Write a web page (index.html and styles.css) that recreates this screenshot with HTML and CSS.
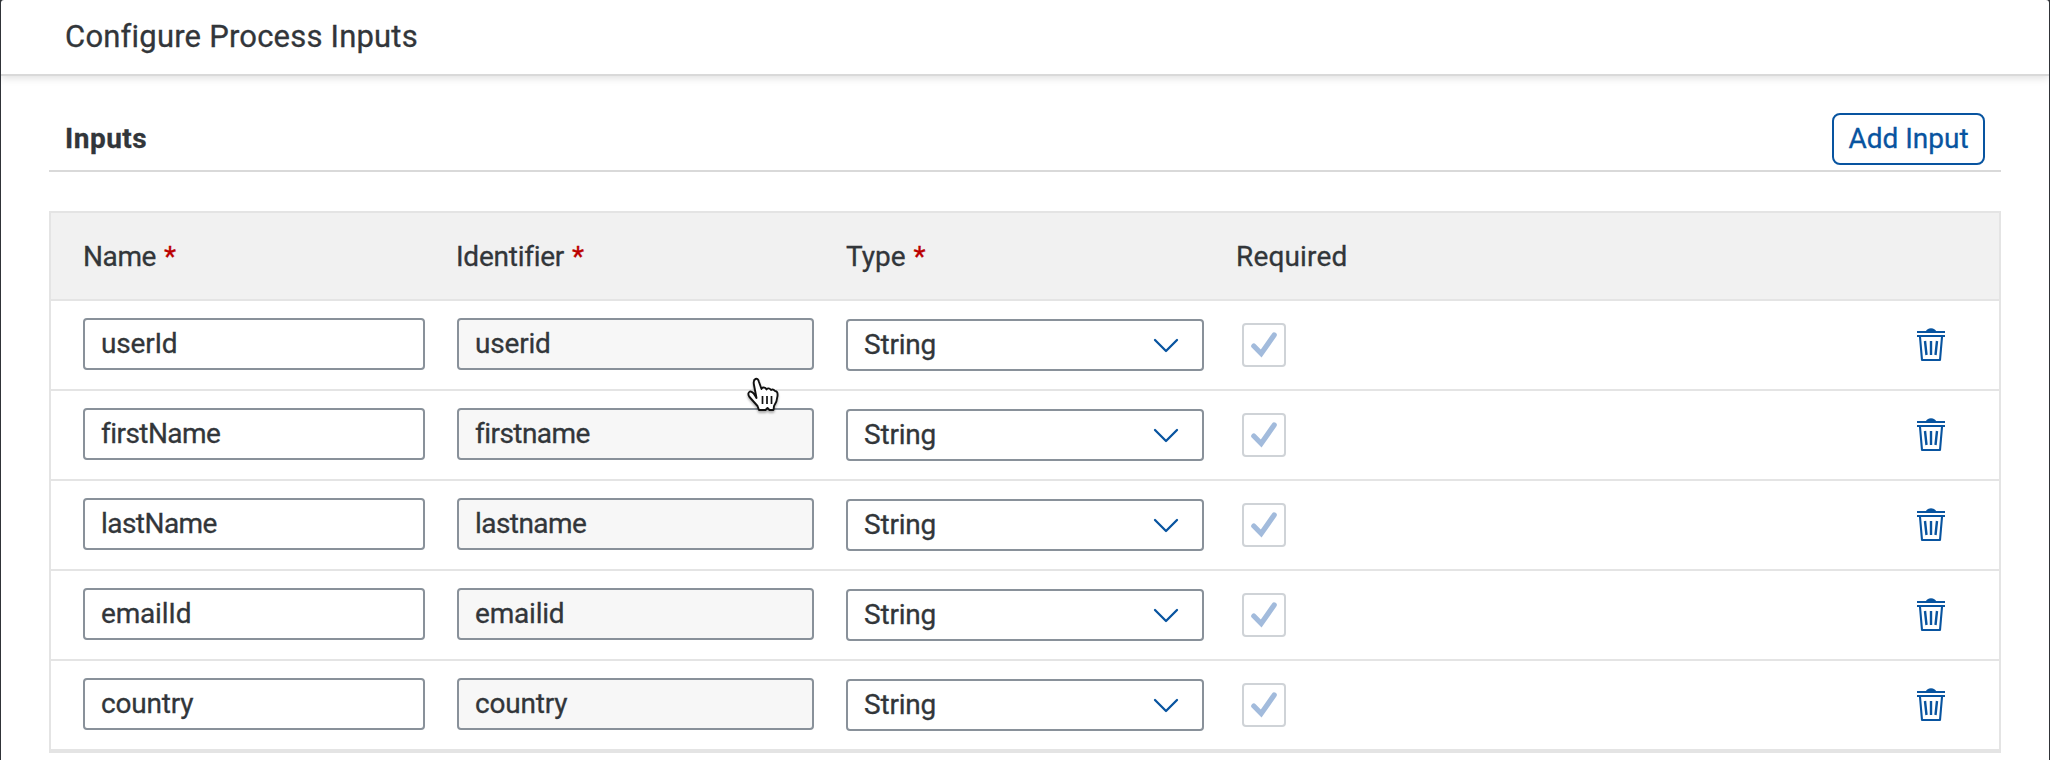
FILE: index.html
```html
<!DOCTYPE html>
<html lang="en">
<head>
<meta charset="utf-8">
<title>Configure Process Inputs</title>
<link rel="stylesheet" href="styles.css">
</head>
<body>
<svg class="sprites" width="0" height="0">
  <symbol id="chevron" viewBox="0 0 26 16"><path d="M2 2L13 13L24 2" fill="none" stroke="#0854a0" stroke-width="2.3" stroke-linecap="round" stroke-linejoin="round"/></symbol>
  <symbol id="check" viewBox="0 0 26 26"><path d="M2.8 14L10.2 21.5L23.2 3" fill="none" stroke="#a2bbdc" stroke-width="5.2" stroke-linecap="round"/></symbol>
  <symbol id="trash" viewBox="0 0 30 34"><path d="M1 4H29M1 8H29M4 9L6 32H24L26 9" fill="none" stroke="#0854a0" stroke-width="2.1" stroke-linejoin="round"/><path d="M9.500 4Q11 .3 15 .3T20.500 4Z" fill="#0854a0"/><path d="M9 13L10.500 27M15 13V27M21 13L19.500 27" fill="none" stroke="#0854a0" stroke-width="2.4"/></symbol>
</svg>
<div class="dialog">
  <header class="dialog-header"><h1 class="title">Configure Process Inputs</h1></header>
  <main class="content">
    <div class="section-bar"><h2 class="section-title">Inputs</h2><button class="add-button">Add Input</button></div>
    <div class="table">
      <div class="row head"><div><span class="h-name">Name</span><b class="star">*</b></div><div><span class="h-identifier">Identifier</span><b class="star">*</b></div><div><span class="h-type">Type</span><b class="star">*</b></div><div><span class="h-required">Required</span></div></div>
      <div class="row"><div class="field"><span>userId</span></div><div class="field readonly"><span>userid</span></div><div class="field select"><span>String</span><svg class="chevron"><use href="#chevron"/></svg></div><div class="checkbox"><svg class="check"><use href="#check"/></svg></div><svg class="trash"><use href="#trash"/></svg></div>
      <div class="row"><div class="field tight"><span>firstName</span></div><div class="field readonly tight"><span>firstname</span></div><div class="field select"><span>String</span><svg class="chevron"><use href="#chevron"/></svg></div><div class="checkbox"><svg class="check"><use href="#check"/></svg></div><svg class="trash"><use href="#trash"/></svg></div>
      <div class="row"><div class="field tight"><span>lastName</span></div><div class="field readonly tight"><span>lastname</span></div><div class="field select"><span>String</span><svg class="chevron"><use href="#chevron"/></svg></div><div class="checkbox"><svg class="check"><use href="#check"/></svg></div><svg class="trash"><use href="#trash"/></svg></div>
      <div class="row"><div class="field"><span>emailId</span></div><div class="field readonly"><span>emailid</span></div><div class="field select"><span>String</span><svg class="chevron"><use href="#chevron"/></svg></div><div class="checkbox"><svg class="check"><use href="#check"/></svg></div><svg class="trash"><use href="#trash"/></svg></div>
      <div class="row"><div class="field"><span>country</span></div><div class="field readonly"><span>country</span></div><div class="field select"><span>String</span><svg class="chevron"><use href="#chevron"/></svg></div><div class="checkbox"><svg class="check"><use href="#check"/></svg></div><svg class="trash"><use href="#trash"/></svg></div>
    </div>
  </main>
  <svg class="pointer" viewBox="0 0 32 36"><path d="M9.500 21L7 8Q6 3 8.500 2T12 5L14.500 12Q15.500 9.500 18.500 11L19.500 12.500Q21.500 10 24 13Q26 11.500 28 14Q31 14 30.500 19Q30 25 27 29L26.500 33H22.500L20.500 31L18.500 33H12L10.500 29L2.500 20Q0 16 3 14.500Q6 14 9.500 21Z" fill="#fff" stroke="#111" stroke-width="1.9" stroke-linejoin="round"/><path d="M15.500 19V27M20 19V27M24.500 19V27" stroke="#111" stroke-width="1.7"/></svg>
</div>
</body>
</html>
```
FILE: styles.css
```css
* { box-sizing: border-box; }
body { margin: 0; background: #303338; font-family: Roboto, "Noto Sans", sans-serif; color: #32363a; -webkit-text-stroke: .3px; }
h1, h2 { margin: 0; }
.sprites { position: absolute; }
.dialog { position: relative; height: 760px; margin: 0 1px; background: #fff; overflow: hidden; border-radius: 3px 3px 0 0; }
.dialog-header { height: 76px; padding: 18px 64px 0; border-bottom: 2px solid #d9d9d9; box-shadow: 0 2px 8px rgba(0, 0, 0, .13); }
.title { font-size: 31px; line-height: 38px; font-weight: 400; letter-spacing: .2px; }
.content { padding: 0 48px; }
.section-bar { display: flex; align-items: center; justify-content: space-between; height: 96px; padding: 32px 16px 0; border-bottom: 2px solid #d9d9d9; }
.section-title { font-size: 28px; line-height: 32px; font-weight: 700; letter-spacing: .5px; }
.add-button { width: 153px; height: 52px; padding: 0; background: #fff; border: 2px solid #0854a0; border-radius: 8px; font: 28px/32px Roboto, sans-serif; color: #0854a0; }
.table { margin-top: 39px; border: 2px solid #e4e4e4; border-bottom-width: 4px; font-size: 28px; line-height: 32px; }
.row { display: grid; grid-template-columns: 342px 357px 358px 44px 30px; column-gap: 32px; align-items: start; height: 90px; padding: 17px 53px 0 32px; border-bottom: 2px solid #e4e4e4; }
.row:last-child { border-bottom: 0; height: 88px; }
.row .trash { width: 30px; height: 34px; margin: 10px 0 0 604px; }
.head { height: 88px; padding-top: 28px; background: #f1f1f1; white-space: nowrap; }
.h-name { letter-spacing: -.4px; }
.h-identifier { letter-spacing: -.25px; margin-left: -1px; }
.h-required { letter-spacing: .15px; }
.star { color: #bb0000; font-weight: 400; margin-left: 8px; }
.field { display: flex; align-items: center; height: 52px; padding: 0 16px; background: #fff; border: 2px solid #89919a; border-radius: 4px; letter-spacing: -.2px; }
.readonly { background: #f7f7f7; }
.tight { letter-spacing: -.55px; }
.select { justify-content: space-between; margin-top: 1px; padding: 0 23px 0 16px; }
.chevron { width: 26px; height: 16px; margin-top: 2px; }
.checkbox { display: grid; place-items: center; width: 44px; height: 44px; margin: 5px 0 0 6px; border: 2px solid #cfd3d7; border-radius: 4px; }
.check { width: 26px; height: 26px; }
.pointer { position: absolute; left: 746px; top: 377px; width: 32px; height: 36px; filter: drop-shadow(0 2px 1px rgba(0, 0, 0, .3)); }
```
